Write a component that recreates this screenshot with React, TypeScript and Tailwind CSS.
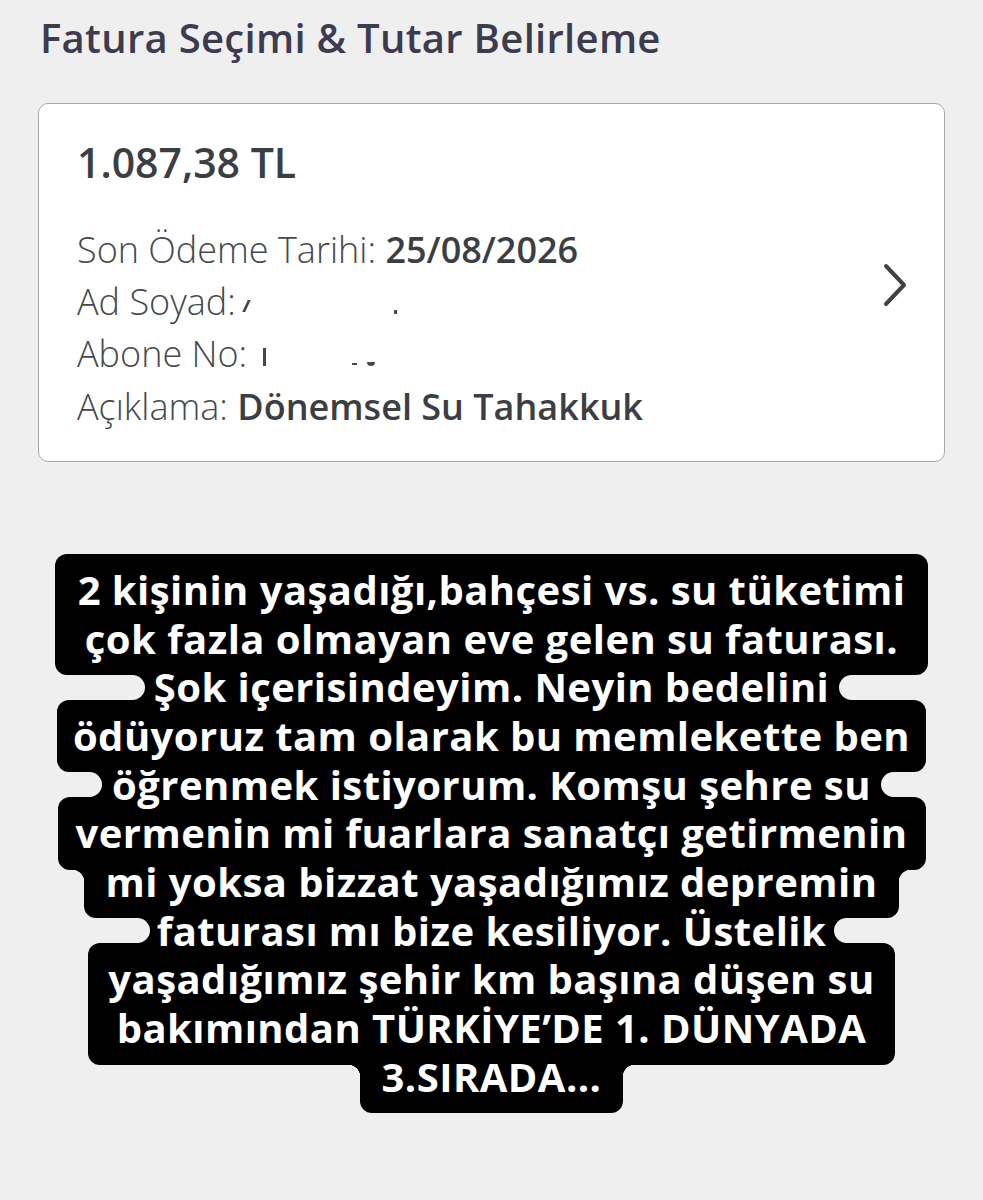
import React from "react";

type Line = { text: string; w: string; notch?: boolean; fillet?: boolean };

const lines: Line[] = [
  { text: "2 kişinin yaşadığı,bahçesi vs. su tüketimi", w: "w-[873px]" },
  { text: "çok fazla olmayan eve gelen su faturası.", w: "w-[873px]" },
  { text: "Şok içerisindeyim. Neyin bedelini", w: "w-[718px]", notch: true },
  { text: "ödüyoruz tam olarak bu memlekette ben", w: "w-[869px]" },
  { text: "öğrenmek istiyorum. Komşu şehre su", w: "w-[803px]", notch: true },
  { text: "vermenin mi fuarlara sanatçı getirmenin", w: "w-[868px]" },
  { text: "mi yoksa bizzat yaşadığımız depremin", w: "w-[815px]", fillet: true },
  { text: "faturası mı bize kesiliyor. Üstelik", w: "w-[708px]", notch: true },
  { text: "yaşadığımız şehir km başına düşen su", w: "w-[807px]" },
  { text: "bakımından TÜRKİYE’DE 1. DÜNYADA", w: "w-[807px]" },
  { text: "3.SIRADA...", w: "w-[263px]", fillet: true },
];

function Chevron() {
  return (
    <svg width="30" height="46" viewBox="0 0 30 46" fill="none" className="shrink-0">
      <path d="M6 4 L24 23 L6 42" stroke="#3f4346" strokeWidth="4" strokeLinecap="round" strokeLinejoin="round" />
    </svg>
  );
}

function StoryText() {
  return (
    <div className="flex flex-col items-center pt-[12px] font-['Open_Sans',sans-serif]">
      {lines.map((l, i) => (
        <div key={i} className={`relative h-[48.7px] ${l.w} flex items-center justify-center`}>
          <div className="absolute inset-x-0 -top-[12px] -bottom-[12px] rounded-[12px] bg-black z-0" />
          {l.notch && (
            <>
              <div className="absolute top-[12px] bottom-[12px] -left-[40px] w-[52px] rounded-full bg-[#efefef] z-[1]" />
              <div className="absolute top-[12px] bottom-[12px] -right-[40px] w-[52px] rounded-full bg-[#efefef] z-[1]" />
            </>
          )}
          {l.fillet && (
            <>
              <div className="absolute top-[12px] -left-[12px] w-[12px] h-[12px] z-[1] bg-[radial-gradient(circle_at_0_100%,transparent_12px,#000_12.5px)]" />
              <div className="absolute top-[12px] -right-[12px] w-[12px] h-[12px] z-[1] bg-[radial-gradient(circle_at_100%_100%,transparent_12px,#000_12.5px)]" />
            </>
          )}
          <span className="relative z-10 whitespace-nowrap text-white font-bold text-[40px] leading-none tracking-[0.45px]">
            {l.text}
          </span>
        </div>
      ))}
    </div>
  );
}

export default function App() {
  return (
    <div className="min-h-[1200px] w-full bg-[#efefef] font-['Open_Sans',sans-serif]">
      <h1 className="pl-[40px] pt-[16px] text-[40px] leading-[44px] font-semibold tracking-[0.3px] text-[#3d3b4e]">
        Fatura Seçimi &amp; Tutar Belirleme
      </h1>

      <div className="mx-[38px] mt-[43px] flex items-center rounded-[10px] border-[1.5px] border-[#a9a9ad] bg-white pl-[38px] pr-[34px] pt-[33.5px] pb-[27.5px]">
        <div className="flex-1">
          <div className="text-[41px] leading-[48px] font-semibold text-[#3b3f43]">1.087,38 TL</div>
          <div className="mt-[38px] text-[36px] leading-[52.4px] font-light text-[#45494d]">
            <div>
              Son Ödeme Tarihi: <span className="font-semibold text-[#3b3f43]">25/08/2026</span>
            </div>
            <div className="flex items-center">
              <span>Ad Soyad:</span>
              <span className="ml-[9px] inline-block h-[12px] w-[3px] skew-x-[-25deg] bg-[#44484c] translate-y-[4px]" />
              <span className="ml-[146px] inline-block h-[4px] w-[3px] bg-[#44484c] translate-y-[10px]" />
            </div>
            <div className="flex items-center">
              <span>Abone No:</span>
              <span className="ml-[16px] inline-block h-[18px] w-[3px] bg-[#44484c] translate-y-[2px]" />
              <span className="ml-[86px] inline-block h-[2px] w-[5px] bg-[#44484c] translate-y-[9px]" />
              <span className="ml-[10px] inline-block h-[4px] w-[8px] rounded-b-full bg-[#44484c] translate-y-[9px]" />
            </div>
            <div>
              Açıklama: <span className="font-semibold text-[#3b3f43]">Dönemsel Su Tahakkuk</span>
            </div>
          </div>
        </div>
        <Chevron />
      </div>

      <div className="mt-[92px]">
        <StoryText />
      </div>
    </div>
  );
}
